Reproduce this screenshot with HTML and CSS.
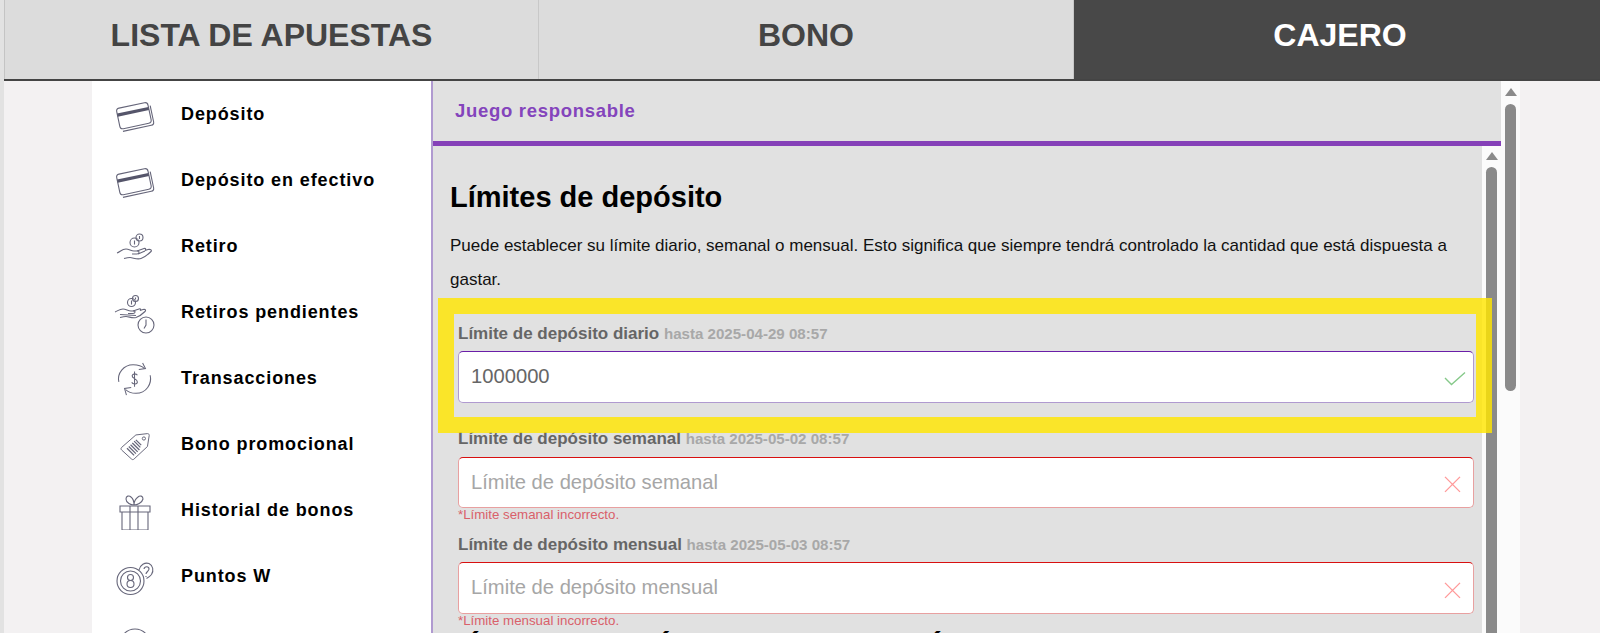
FILE: index.html
```html
<!DOCTYPE html>
<html lang="es">
<head>
<meta charset="utf-8">
<title>Cajero</title>
<link rel="stylesheet" href="styles.css">
</head>
<body>
<div class="page">
  <nav class="tabs">
    <a class="tab tab-first">LISTA DE APUESTAS</a>
    <a class="tab tab-second">BONO</a>
    <a class="tab tab-active">CAJERO</a>
  </nav>
  <div class="main">
    <aside class="sidebar">
      <a class="menu-item"><span class="menu-icon"><svg class="ico" width="40" height="32" viewBox="0 0 40 32"><g transform="rotate(-12 20 16)"><rect x="3" y="5" width="32" height="21" rx="3"/><path d="M5 28.500h29a3 3 0 0 0 3-3V9"/><path class="thick" d="M3 11.500h32"/></g></svg></span><span class="menu-label">Depósito</span></a>
      <a class="menu-item"><span class="menu-icon"><svg class="ico" width="40" height="32" viewBox="0 0 40 32"><g transform="rotate(-12 20 16)"><rect x="3" y="5" width="32" height="21" rx="3"/><path d="M5 28.500h29a3 3 0 0 0 3-3V9"/><path class="thick" d="M3 11.500h32"/></g></svg></span><span class="menu-label">Depósito en efectivo</span></a>
      <a class="menu-item"><span class="menu-icon"><svg class="ico" width="40" height="36" viewBox="0 -3 40 36"><circle cx="19.500" cy="9.500" r="4.500"/><circle cx="24.500" cy="4.500" r="3.500"/><path d="M19.500 7.500v4M24.500 3v3"/><path d="M2 20c3-1 5-4 9-4 3 0 5 2 8 2h4c1.500 0 1.500 3-1 3h-5"/><path d="M22 18l7-2.500c2-.5 2 1 1 2l3-1c3-.5 4 1 3 2-3 3-7 6-10 7-4 1.500-8-1-11-1-2 0-4 .5-6 1"/><path d="M23 21l7-3"/></svg></span><span class="menu-label">Retiro</span></a>
      <a class="menu-item"><span class="menu-icon"><svg class="ico" width="42" height="40" viewBox="0 -1 42 40"><circle cx="17.500" cy="7.500" r="4"/><circle cx="21.500" cy="3.500" r="3"/><path d="M17.500 5.500v4M21.500 2.500v2"/><path d="M1 17c3-1 4-3 8-3 3 0 5 2 8 2h3c1.500 0 1.500 2.500-1 2.500h-5"/><path d="M19 16l6-2c2-.5 2 .5 1 1.500l3-1c3-.5 3 1 2 2-2 2-6 5-9 6-4 1-7-1-10-1-2 0-4 .5-6 1"/><path d="M6 19.500l16 1"/><circle cx="32" cy="30" r="8"/><path d="M32 24.500v5.500l-2 3.500"/></svg></span><span class="menu-label">Retiros pendientes</span></a>
      <a class="menu-item"><span class="menu-icon"><svg class="ico" width="38" height="38" viewBox="0 0 40 40"><path d="M3 22c-2-9 5-18 15-18 4 0 9 1 12 4"/><path d="M28 2l3 6-7 1"/><path d="M36 15c2 9-4 19-15 19-4 0-8-1-11-4"/><path d="M11 36l-2-7 7-1"/><path d="M22.500 15c-1-2-5-2-5.500.5-.5 3 5.500 3 5.500 6.500 0 2.500-4.500 3-6 .5M19.500 11v16"/></svg></span><span class="menu-label">Transacciones</span></a>
      <a class="menu-item"><span class="menu-icon"><svg class="ico" width="32" height="31" viewBox="0 0 36 34"><path d="M3 18L19 4l13-1.500c1.500 0 2 1 2 2L32 17 17 31c-1 1-2 1-3 0L3 21c-1-1-1-2 0-3z"/><circle cx="28" cy="8" r="1.800"/><path class="bars" d="M9 19l8 8M11 17l8 8M13 15l8 8M15 13l8 8M17 11l7 7M19 9.500l6 6"/></svg></span><span class="menu-label">Bono promocional</span></a>
      <a class="menu-item"><span class="menu-icon"><svg class="ico" width="36" height="36" viewBox="0 -1 36 36"><path d="M3 11h30v6H3zM5 17h26v18H5zM13 11v24M21 11v24"/><path d="M17 10c-3 0-8-2-8-6 0-3 3-4 5-2 2 1.500 3 5 3 8zM17 10c3 0 8-2 9-6 0-3-3-4-5-2-2 1.500-4 5-4 8z"/></svg></span><span class="menu-label">Historial de bonos</span></a>
      <a class="menu-item"><span class="menu-icon"><svg class="ico" width="38" height="36" viewBox="0 0 38 36"><circle cx="14.500" cy="21" r="13.500"/><circle cx="14.500" cy="21" r="10"/><circle cx="14.500" cy="17.500" r="3"/><circle cx="14.500" cy="24" r="3.500"/><path d="M23 10c1-5 6-8 10-6.500 4 2 5 7 2.500 11-1.500 2-3 3-5 4"/><path d="M28 9c.5-3 5-3 5 0 0 2-3 3-3 5M30 16v1"/></svg></span><span class="menu-label">Puntos W</span></a>
      <a class="menu-item"><span class="menu-icon"><svg class="ico" width="36" height="36" viewBox="0 0 36 36"><circle cx="18" cy="18" r="15"/></svg></span><span class="menu-label">Juego responsable</span></a>
    </aside>
    <section class="panel">
      <header class="panel-head">Juego responsable</header>
      <div class="panel-body">
        <div class="content">
          <h1 class="title">Límites de depósito</h1>
          <p class="intro">Puede establecer su límite diario, semanal o mensual. Esto significa que siempre tendrá controlado la cantidad que está dispuesta a gastar.</p>
          <div class="group">
            <label class="label">Límite de depósito diario <span class="until">hasta 2025-04-29 08:57</span></label>
            <div class="field">
              <input class="input ok" type="text" value="1000000">
              <svg class="state" width="22" height="15" viewBox="0 0 22 15"><path class="state-ok" d="M1 6.500l6.500 6.500L21 1"/></svg>
            </div>
          </div>
          <div class="group">
            <label class="label">Límite de depósito semanal <span class="until">hasta 2025-05-02 08:57</span></label>
            <div class="field">
              <input class="input bad" type="text" placeholder="Límite de depósito semanal">
              <svg class="state" width="22" height="17" viewBox="0 0 22 17"><path class="state-bad" d="M1 1l15 15M16 1L1 16"/></svg>
            </div>
            <div class="error">*Límite semanal incorrecto.</div>
          </div>
          <div class="group">
            <label class="label">Límite de depósito mensual <span class="until">hasta 2025-05-03 08:57</span></label>
            <div class="field">
              <input class="input bad" type="text" placeholder="Límite de depósito mensual">
              <svg class="state" width="22" height="17" viewBox="0 0 22 17"><path class="state-bad" d="M1 1l15 15M16 1L1 16"/></svg>
            </div>
            <div class="error">*Límite mensual incorrecto.</div>
          </div>
          <h2 class="title title-next">LÍMITES DE PÉRDIDA POR UN DÍA</h2>
        </div>
        <div class="scroll scroll-inner"><span class="arrow"></span><span class="thumb"></span></div>
      </div>
    </section>
    <div class="scroll scroll-outer"><span class="arrow"></span><span class="thumb"></span></div>
  </div>
  <div class="highlight"></div>
</div>
</body>
</html>
```
FILE: styles.css
```css
* { box-sizing: border-box; }
html, body { margin: 0; height: 100%; overflow: hidden; }
body { font-family: "Liberation Sans", Arial, sans-serif; background: #f3f1f2; }
.page { position: relative; height: 633px; overflow: hidden; border-left: 4px solid #e2e2e2; }

.tabs { display: flex; height: 81px; border-bottom: 2px solid #444; }
.tab { display: flex; align-items: center; justify-content: center; font-size: 32px; font-weight: 700; color: #444; background: #dcdcdc; padding-bottom: 8px; }
.tab-first { width: 535px; border-right: 1px solid #c8c8c8; border-left: 1px solid #c4c4c4; }
.tab-second { width: 535px; border-right: 1px solid #c8c8c8; }
.tab-active { flex: 1; background: #484848; color: #fff; padding-left: 6px; }

.main { display: flex; height: 552px; margin-left: 88px; width: 1428px; }
.sidebar { width: 341px; flex: none; background: #fff; border-right: 2px solid #b09ad0; }
.menu-item { display: flex; align-items: center; height: 66px; color: #000; }
.menu-icon { width: 89px; flex: none; display: flex; justify-content: center; padding-right: 3px; padding-top: 4px; }
.menu-label { font-size: 18px; font-weight: 700; letter-spacing: .9px; padding-top: 1px; }
.ico { fill: none; stroke: #66667a; stroke-width: 1.1; display: block; }
.ico .thick { stroke-width: 3.2; stroke: #55556a; }
.ico .bars { stroke-width: 1.4; }

.panel { width: 1068px; flex: none; display: flex; flex-direction: column; background: #e1e1e1; }
.panel-head { height: 65px; padding: 0 0 1px 22px; display: flex; align-items: center; font-size: 18.500px; font-weight: 700; letter-spacing: .7px; color: #8444bc; border-bottom: 5px solid #8540b8; }
.panel-body { flex: 1; display: flex; min-height: 0; }
.content { flex: 1; min-width: 0; padding: 33px 8px 0 17px; overflow: hidden; }

.title { margin: 0; font-size: 29px; line-height: 36px; font-weight: 700; color: #000; }
.title-next { margin-top: -9px; font-size: 31px; }
.intro { margin: 14px 0 26.500px; font-size: 17px; line-height: 34px; color: #111; }

.group { height: 105.500px; margin-left: 8px; }
.label { display: block; font-size: 17px; line-height: 19px; font-weight: 700; color: #666; margin-bottom: 8.500px; }
.until { font-size: 15.100px; color: #a8a8a8; }
.field { position: relative; }
.input { display: block; width: 100%; height: 51.500px; padding: 0 50px 0 12px; font: 20.200px "Liberation Sans", Arial, sans-serif; color: #666; background: #fff; border: 1px solid; border-radius: 5px; outline: none; }
.input::placeholder { color: #a6a6a6; opacity: 1; }
.input.ok { border-color: #6a1ea8 #b09ad0 #b09ad0 #b09ad0; }
.input.bad { border-color: #d81010 #e8a0a0 #e8a0a0 #e8a0a0; }
.state { position: absolute; right: 8px; top: 50%; transform: translateY(-36%); }
.state-ok { fill: none; stroke: #86c98a; stroke-width: 1.4; }
.state-bad { fill: none; stroke: #ff9a9a; stroke-width: 1.4; }
.error { font-size: 13.300px; line-height: 14px; color: #d9606a; }

.scroll { width: 19px; flex: none; display: flex; flex-direction: column; align-items: center; background: #fbfbfb; }
.arrow { width: 0; height: 0; border: 6px solid transparent; border-top: 0; border-bottom: 8px solid #8a8a8a; flex: none; }
.thumb { width: 11px; background: #8a8a8a; border-radius: 6px; flex: none; }
.scroll-inner { padding-top: 6px; }
.scroll-inner .thumb { margin-top: 7px; height: 600px; }
.scroll-outer { padding-top: 7px; }
.scroll-outer .thumb { margin-top: 8px; height: 287px; }

.highlight { position: absolute; left: 434px; top: 298px; width: 1054px; height: 135px; border: 16px solid rgba(255, 229, 0, .82); }
```
